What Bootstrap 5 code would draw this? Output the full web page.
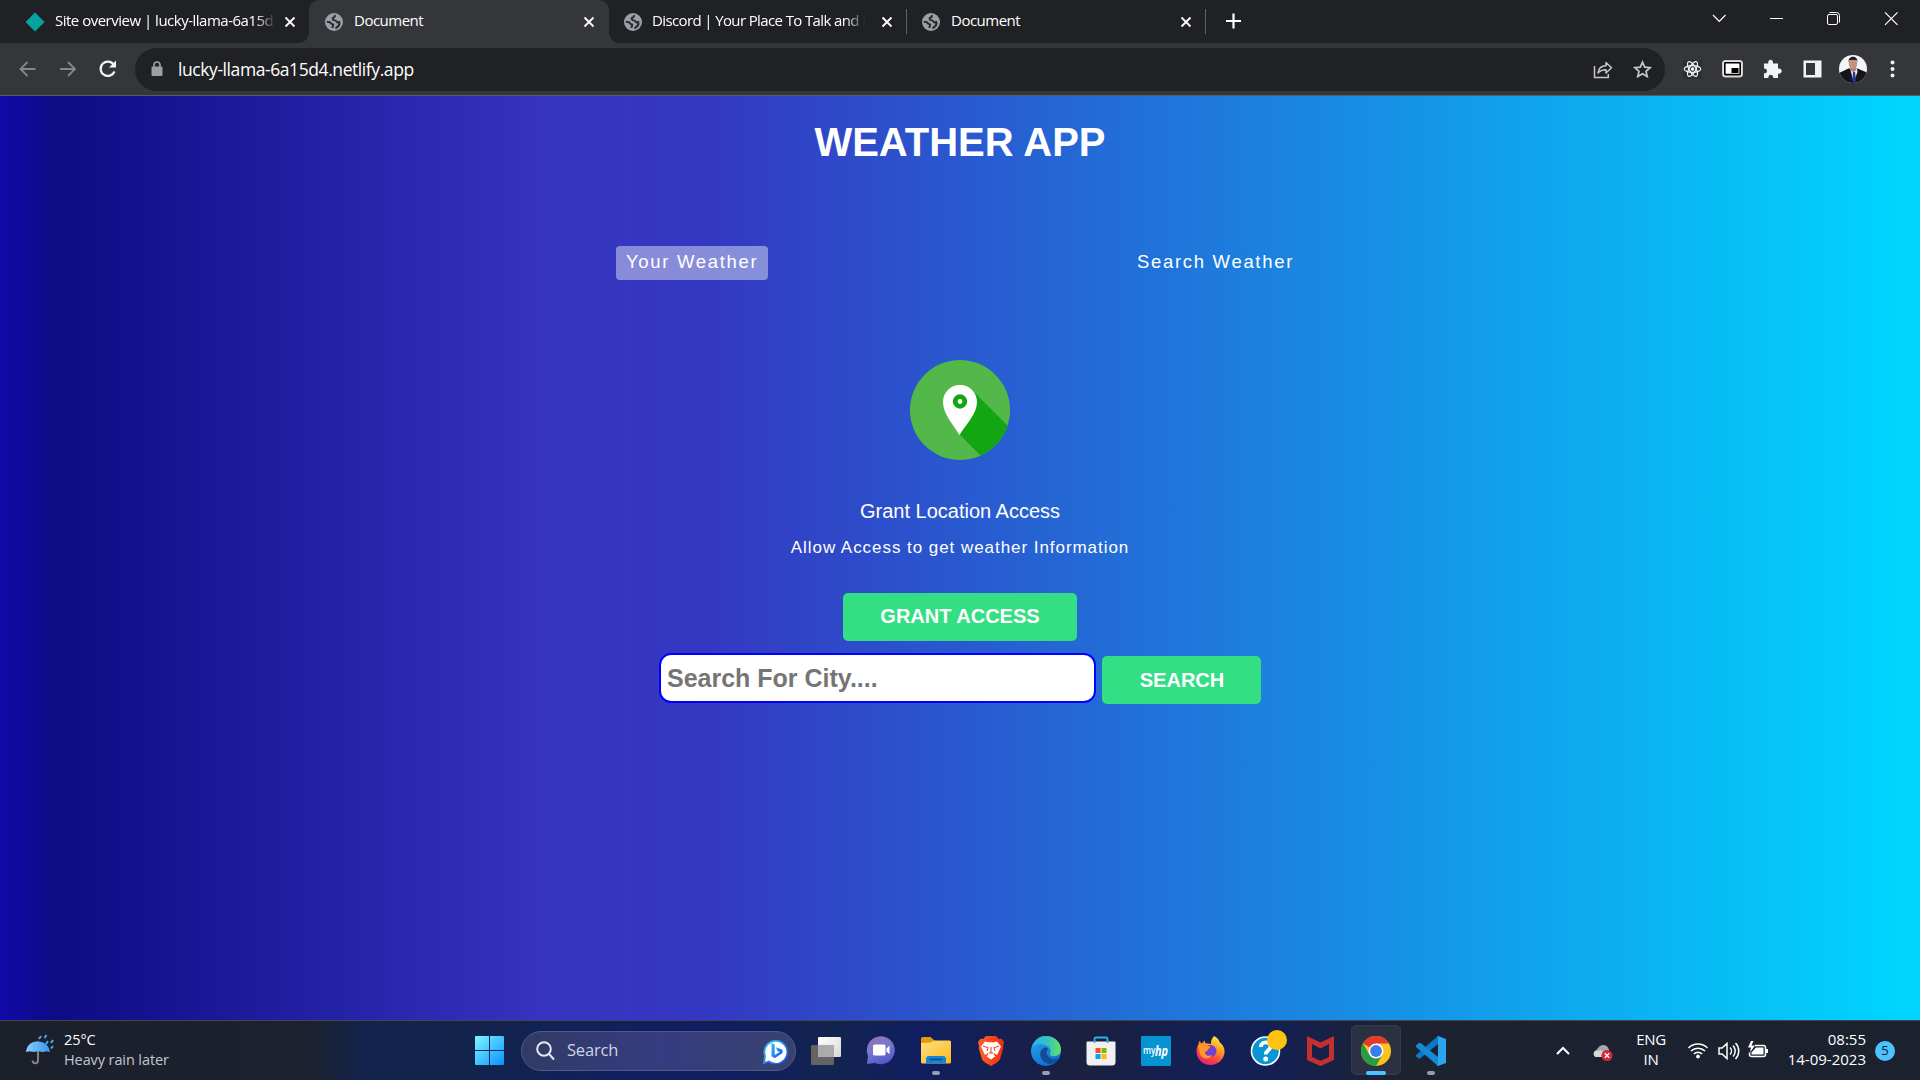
<!DOCTYPE html>
<html lang="en">
<head>
<meta charset="utf-8">
<meta name="viewport" content="width=device-width, initial-scale=1">
<title>Document</title>
<link href="https://cdn.jsdelivr.net/npm/bootstrap@5.3.0/dist/css/bootstrap.min.css" rel="stylesheet">
<style>
  body { width: 1920px; height: 1080px; overflow: hidden; font-family: "Open Sans", "Noto Sans", sans-serif; }
  svg { display: block; flex: none; }
  .tabstrip { height: 43px; background: #202124; color: #fff; font-size: 15px; }
  .browser-tab { height: 43px; }
  .tab-first { width: 309px; padding-left: 25px; padding-right: 13px; }
  .tab-active { width: 300px; background: #35363a; border-radius: 10px 10px 0 0; position: relative; padding-left: 16px; padding-right: 14px; }
  .tab-active::before, .tab-active::after { content: ""; position: absolute; bottom: 0; width: 10px; height: 10px; }
  .tab-active::before { left: -10px; background: radial-gradient(circle at 0 0, transparent 9.5px, #35363a 10px); }
  .tab-active::after { right: -10px; background: radial-gradient(circle at 100% 0, transparent 9.5px, #35363a 10px); }
  .tab-third { width: 297px; padding-left: 15px; padding-right: 13px; }
  .tab-fourth { width: 298px; padding-left: 15px; padding-right: 13px; }
  .tab-title { margin-left: 10px; letter-spacing: -.5px; flex: 1 1 0; min-width: 0; line-height: 20px; padding-bottom: 3px; }
  .tab-third .tab-title { letter-spacing: -.62px; }
  .fade-end { -webkit-mask-image: linear-gradient(90deg, #000 91%, transparent 100%); mask-image: linear-gradient(90deg, #000 91%, transparent 100%); }
  .tab-rule { width: 1px; height: 25px; background: #5f6368; }
  .toolbar { height: 53px; background: #35363a; border-bottom: 1px solid #5b5c60; padding: 0 15px 0 18px; }
  .omnibox { width: 1530px; height: 43px; border-radius: 22px; background: #202124; margin-left: 16px; padding: 0 13px 0 15px; color: #fff; font-size: 17.5px; }
  .url { margin-left: 14px; letter-spacing: -.42px; line-height: 24px; }
  .page { height: 924px; font-family: "Liberation Sans", Arial, sans-serif; color: #fff;
    background: linear-gradient(90deg, #1109a8 0%, #0c0c84 3%, #3533bf 28%, #3438c2 37%, #00d4ff 99%); padding-top: 23px; }
  .app-title { font-size: 40px; font-weight: 700; line-height: 47px; margin-bottom: 80px; }
  .mode-tabs { width: 688px; height: 34px; }
  .mode-tab { padding: 0 10px 2px; height: 34px; font-size: 18.500px; letter-spacing: 1.69px; line-height: 32px; border-radius: 4px; }
  .mode-tab.selected { background: rgba(219,226,239,.5); }
  .pin { margin-top: 80px; }
  .grant-title { font-size: 20px; line-height: 24px; margin-top: 39px; }
  .grant-text { font-size: 17px; line-height: 20px; letter-spacing: .95px; margin-top: 15px; }
  .action { background: #33de84; color: #fff; font-weight: 700; font-size: 20px; border-radius: 5px; height: 48px; line-height: 44px; text-align: center; text-transform: uppercase; }
  .grant-btn { width: 234px; margin-top: 35px; padding: 0 0 3px; }
  .search-btn { width: 159px; margin-top: 3px; padding: 0 0 1px 1px; }
  .search-form { margin-top: 12px; }
  .city { width: 437px; height: 50px; border: 2px solid #00f; border-radius: 12px; background: #fff; font-weight: 700; font-size: 25px; padding: 1px 6px 0; outline: 0; }
  .city::placeholder { color: #757575; opacity: 1; }
  .taskbar { height: 60px; border-top: 1px solid #44464b; color: #fff;
    background: linear-gradient(90deg, #1c202b 0, #1b212f 310px, #12234e 370px, #12244c 470px, #111f60 640px, #101d60 740px, #13244f 830px, #101e60 920px, #1b2040 1080px, #122056 1210px, #142052 1280px, #1d2231 1400px, #1c212e 1920px); }
  .weather { width: 447px; padding-left: 25px; font-size: 14.5px; line-height: 20px; }
  .weather-text { margin-left: 9px; letter-spacing: -.1px; padding-bottom: 2px; }
  .muted { color: #c3c7cc; }
  .app { width: 55px; height: 59px; position: relative; }
  .app .running { position: absolute; bottom: 5px; left: 23.5px; width: 8px; height: 4px; border-radius: 2px; background: #989cab; }
  .app.current::before { content: ""; position: absolute; left: 2.5px; top: 4px; width: 50px; height: 50px; border-radius: 5px; background: #2c3043; border: 1px solid #363a4b; }
  .app.current svg { position: relative; }
  .app.current .running { left: 17.5px; width: 20px; background: #4cc2ff; }
  .task-search { width: 275px; height: 40px; border-radius: 20px; background: linear-gradient(90deg, #303b66, #353c80 50%, #37426e); border: 1px solid #505a85; padding: 0 6px 0 14px; margin-left: 4px; margin-right: 2px; color: #d0d4e2; font-size: 16.5px; }
  .search-word { margin-left: 12px; letter-spacing: -.2px; }
  .tray { font-size: 15px; line-height: 20px; padding-right: 25px; }
  .tray-text { padding-bottom: 3px; }
  .clock { width: 94px; margin-right: 9px; letter-spacing: 0; }
  .lang { width: 40px; letter-spacing: -.3px; margin-right: 11px; }
  .notice { width: 20px; height: 20px; border-radius: 50%; background: #4cc2ff; color: #10202c; font-size: 13px; padding-bottom: 1px; }
</style>
</head>
<body>
<svg class="d-none">
  <symbol id="globe" viewBox="0 0 18 18"><circle cx="9" cy="9" r="9" fill="#9aa0a6"/><path d="M10.500 2.200c-1 .9-.4 1.700-1.900 2.300-1.400.5-1.200 1.700-.4 2.300.9.800 3 .4 3.400 1.800.3 1.200 1.700.8 2.700.4.700 2-.8 4.500-3.800 6.300M1.800 8.800c1.900 0 3.400.1 4 1.400.4 1 1.900.8 2.400 1.300.4.600-.6 1.500-.8 3.500" fill="none" stroke="#292a2d" stroke-width="2"/></symbol>
  <symbol id="cross" viewBox="0 0 12 12"><path d="M1.500 1.500l9 9m0-9l-9 9" stroke="#fff" stroke-width="1.800"/></symbol>
</svg>

<header>
  <div class="tabstrip d-flex">
    <div class="browser-tab tab-first d-flex align-items-center">
      <svg width="20" height="20" viewBox="0 0 20 20"><path d="M10 .5L19.500 10 10 19.500.5 10z" fill="#05a3a0"/></svg>
      <div class="tab-title text-nowrap fade-end">Site overview | lucky-llama-6a15d</div>
      <svg width="12" height="12" class="ms-2"><use href="#cross"/></svg>
    </div>
    <div class="browser-tab tab-active d-flex align-items-center">
      <svg width="18" height="18"><use href="#globe"/></svg>
      <div class="tab-title text-nowrap" style="margin-left:11px">Document</div>
      <svg width="12" height="12"><use href="#cross"/></svg>
    </div>
    <div class="browser-tab tab-third d-flex align-items-center">
      <svg width="18" height="18"><use href="#globe"/></svg>
      <div class="tab-title text-nowrap fade-end">Discord | Your Place To Talk and H</div>
      <svg width="12" height="12" class="ms-3"><use href="#cross"/></svg>
    </div>
    <div class="d-flex align-items-center"><div class="tab-rule"></div></div>
    <div class="browser-tab tab-fourth d-flex align-items-center">
      <svg width="18" height="18"><use href="#globe"/></svg>
      <div class="tab-title text-nowrap" style="margin-left:11px">Document</div>
      <svg width="12" height="12"><use href="#cross"/></svg>
    </div>
    <div class="d-flex align-items-center"><div class="tab-rule"></div></div>
    <svg width="60" height="42" viewBox="0 0 60 42"><path d="M27.500 13.500v15M20 21h15" stroke="#fff" stroke-width="2.200"/></svg>
    <svg class="ms-auto" width="220" height="42" viewBox="1700 0 220 42" fill="none" stroke="#fff"><path d="M1713 15l6.300 6.500 6.200-6.500M1885 12.300l12.500 12.500m0-12.500L1885 24.800" stroke-width="1.200"/><path d="M1770 18.500h13"/><rect x="1827.500" y="14.500" width="10" height="10" rx="1.500"/><path d="M1829.500 12.500h7a3 3 0 0 1 3 3v7"/></svg>
  </div>

  <div class="toolbar d-flex align-items-center">
    <svg width="101" height="30" viewBox="0 0 101 30" fill="none"><path d="M17.500 15h-15m7-7l-7 7 7 7M42 15h15m-7-7l7 7-7 7" stroke="#85878a" stroke-width="1.800"/><path d="M96 11A7.200 7.200 0 1 0 96.500 17.500" stroke="#f1f3f4" stroke-width="2.200"/><path d="M98 6.500v7h-7z" fill="#f1f3f4"/></svg>
    <div class="omnibox d-flex align-items-center">
      <svg width="14" height="16" viewBox="0 0 14 16"><rect x="1.500" y="5.500" width="11" height="9.500" rx="1.200" fill="#9aa0a6"/><path d="M4 6V4a3 3 0 0 1 6 0v2" fill="none" stroke="#9aa0a6" stroke-width="1.600"/></svg>
      <span class="url">lucky-llama-6a15d4.netlify.app</span>
      <svg class="ms-auto" width="60" height="24" viewBox="1592 57 60 24" fill="none" stroke="#c5c7ca" stroke-width="1.500"><path d="M1594.500 66v11.500h13.800v-3.500"/><path d="M1598 73c.5-5 3.500-7.300 8-7.300v-3.200l5.500 5.300-5.500 5.200v-3.300c-3.500 0-6 .8-8 3.300z" stroke-linejoin="round"/><path d="M1642.500 62.200l2.200 5 5.400.5-4.100 3.600 1.200 5.300-4.700-2.800-4.700 2.800 1.200-5.300-4.100-3.600 5.400-.5z" stroke-width="1.700"/></svg>
    </div>
    <svg width="240" height="36" viewBox="1665 51 240 36">
      <rect x="1683" y="60" width="19" height="19" fill="#2d2e31"/>
      <g fill="none" stroke="#f1f3f4" stroke-width="1.200"><ellipse cx="1692.500" cy="69" rx="8.300" ry="3.300"/><ellipse cx="1692.500" cy="69" rx="8.300" ry="3.300" transform="rotate(60 1692.500 69)"/><ellipse cx="1692.500" cy="69" rx="8.300" ry="3.300" transform="rotate(120 1692.500 69)"/></g><circle cx="1692.500" cy="69" r="1.700" fill="#fff"/>
      <rect x="1722.500" y="60.500" width="20" height="16.500" rx="2.500" fill="#e9eaec" stroke="#c9cacd"/><rect x="1724.800" y="62.800" width="15.400" height="11.800" rx=".5" fill="#fff" stroke="#000" stroke-width="1.600"/><rect x="1731.500" y="68" width="7" height="5" fill="#000"/>
      <path d="M1764 63.500h4.200c-.5-5 5.300-5 4.800 0h5v5c5-.5 5 5.700 0 5.200v4.300h-4.700c.3-4.300-5.300-4.300-5 0h-4.300v-4.700c4 .2 4-5 0-4.800z" fill="#f1f3f4"/>
      <path d="M1803.500 60.500h18v17h-18zm2.500 2.500v12h9V63z" fill="#f1f3f4" fill-rule="evenodd"/>
      <clipPath id="face"><circle cx="1853" cy="69" r="14"/></clipPath>
      <g clip-path="url(#face)"><rect x="1839" y="55" width="28" height="28" fill="#f3f4f6"/><path d="M1839 84v-11l9.500-4.500h9l9.500 4v11.500z" fill="#14141c"/><path d="M1850 68l3.500 4 3.500-4 .5 4-3 8h-1.500z" fill="#dfe3ee"/><path d="M1853 72l2 0 1 9-2 2-1.500-2z" fill="#28368c"/><path d="M1850.500 66h5.500v4l-2.500 2-3-2z" fill="#ac7d68"/><ellipse cx="1853" cy="63.500" rx="4.200" ry="5.600" fill="#c2947d"/><path d="M1848.500 62c-.5-7 9.500-7 9 0l-1-2h-7z" fill="#24201f"/></g>
      <g fill="#f1f3f4"><circle cx="1892.500" cy="62.500" r="2"/><circle cx="1892.500" cy="69" r="2"/><circle cx="1892.500" cy="75.500" r="2"/></g>
    </svg>
  </div>
</header>

<main class="page d-flex flex-column align-items-center">
  <h1 class="app-title">WEATHER APP</h1>
  <nav class="mode-tabs d-flex justify-content-between">
    <div class="mode-tab selected">Your Weather</div>
    <div class="mode-tab">Search Weather</div>
  </nav>
  <svg class="pin" width="100" height="100" viewBox="0 0 100 100">
    <clipPath id="disc"><circle cx="50" cy="50" r="50"/></clipPath>
    <g clip-path="url(#disc)"><path d="M0 0h100v100H0z" fill="#52b849"/><path d="M64.500 32.500L105 73v35H83L50 75z" fill="#12a712"/></g>
    <path d="M50 25c-9.500 0-17 7.500-17 17 0 12 10 22 16.500 33C56 64 67 54 67 42c0-9.500-7.500-17-17-17z" fill="#fff"/>
    <circle cx="50" cy="41.500" r="4.800" fill="#fff" stroke="#12a712" stroke-width="4.800"/>
  </svg>
  <div class="grant-title">Grant Location Access</div>
  <div class="grant-text">Allow Access to get weather Information</div>
  <button class="action grant-btn border-0">Grant Access</button>
  <form class="search-form d-flex align-items-start" style="gap:6px">
    <input class="city" placeholder="Search For City....">
    <button type="button" class="action search-btn border-0">Search</button>
  </form>
</main>

<footer class="taskbar d-flex align-items-center">
  <div class="weather d-flex align-items-center">
    <svg width="30" height="32" viewBox="0 0 30 32" style="margin-top:-4px"><defs><linearGradient id="umb"><stop offset="0" stop-color="#8ccaff"/><stop offset="1" stop-color="#3499ee"/></linearGradient></defs><path d="M13 18v9.500a2.700 2.700 0 0 1-5.400 0" fill="none" stroke="#88827e" stroke-width="2"/><path d="M1 19C2 11 7 8.500 13 8.500S24 12 25 19l-3-.8-4 .8-5-.8-4.500.8-4-.8z" fill="url(#umb)"/><path d="M13 8.500c-3 2-4 5-4.500 10.500M13 8.500c3 2 4.500 5 5 10.500" fill="none" stroke="#5bacf5" stroke-width=".8"/><path d="M16 3l-2 3m7.500-4l-2 3m3.500 3l-2 3m7-4l-2 3m2 3l-2 2.500" stroke="#4da7ee" stroke-width="2"/></svg>
    <div class="weather-text"><div>25°C</div><div class="muted">Heavy rain later</div></div>
  </div>
  <div class="d-flex align-items-center" style="margin-left:15px">
    <div class="app d-flex align-items-center justify-content-center"><svg width="29" height="29" viewBox="0 0 29 29"><defs><linearGradient id="win" x2="1" y2="1"><stop stop-color="#7df6ff"/><stop offset="1" stop-color="#0992ff"/></linearGradient></defs><path d="M0 1a1 1 0 0 1 1-1h13v14H0zm15-1h13a1 1 0 0 1 1 1v13H15zM0 15h14v14H1a1 1 0 0 1-1-1zm15 0h14v13a1 1 0 0 1-1 1H15z" fill="url(#win)"/></svg></div>
    <div class="task-search d-flex align-items-center">
      <svg width="19" height="20" viewBox="0 0 19 20" fill="none" stroke="#e4e8f0" stroke-width="2"><circle cx="8" cy="8" r="6.800"/><path d="M13 13l5 5.500"/></svg>
      <span class="search-word">Search</span>
      <svg class="ms-auto" width="26" height="26" viewBox="0 0 26 26"><defs><linearGradient id="bing" x2="1" y2="1"><stop stop-color="#35c4f3"/><stop offset="1" stop-color="#174ae4"/></linearGradient></defs><path d="M1 25l1-7a11.500 11.500 0 1 1 4 5.500z" fill="#fff" stroke="url(#bing)" stroke-width="1.800"/><path d="M8.500 5l3.200 1.300V17l5-3-2.300-1.100-1.500-3.600 6.600 2.500v3.300L11.700 20.300 8.500 18.300z" fill="url(#bing)"/></svg>
    </div>
    <div class="app d-flex align-items-center justify-content-center"><svg width="30" height="28" viewBox="0 0 30 28"><defs><linearGradient id="tv" x2="1" y2="1"><stop stop-color="#fff"/><stop offset="1" stop-color="#d8d8d8"/></linearGradient></defs><rect y="8" width="23" height="20" rx="1.200" fill="#646464"/><rect x="7" width="23" height="20" rx="1.200" fill="url(#tv)"/><path d="M7 8h16v12H8a1 1 0 0 1-1-1z" fill="#ababab"/></svg></div>
    <div class="app d-flex align-items-center justify-content-center"><svg width="30" height="29" viewBox="0 0 30 29"><defs><linearGradient id="chat" x1=".2" x2=".6" y2="1"><stop stop-color="#9275b8"/><stop offset=".5" stop-color="#7277ce"/><stop offset="1" stop-color="#5058c8"/></linearGradient></defs><path d="M1 28l1-8A14 14 0 1 1 9 27z" fill="url(#chat)"/><rect x="7" y="8.500" width="12.500" height="11" rx="1.500" fill="#fff"/><path d="M20.500 12.500l3-2.800v8.600l-3-2.800z" fill="#fff"/></svg></div>
    <div class="app d-flex align-items-center justify-content-center"><svg width="30" height="27" viewBox="0 0 30 27"><defs><linearGradient id="fold" x2="1" y2="1"><stop stop-color="#ffe07a"/><stop offset="1" stop-color="#f8ba22"/></linearGradient></defs><path d="M0 2a2 2 0 0 1 2-2h7.500l4 3.500V9H0z" fill="#e09c0c"/><path d="M0 6l10-.5 3-2h15.500A1.500 1.500 0 0 1 30 5v20a1.500 1.500 0 0 1-1.500 1.500h-27A1.500 1.500 0 0 1 0 25z" fill="url(#fold)"/><path d="M5 26.500V22a3 3 0 0 1 3-3h14a3 3 0 0 1 3 3v4.500z" fill="#1484d5"/><path d="M8.500 22.500h13" stroke="#0b4b86" stroke-width="1.500"/></svg><span class="running"></span></div>
    <div class="app d-flex align-items-center justify-content-center"><svg width="26" height="30" viewBox="0 0 26 30"><defs><linearGradient id="brave"><stop stop-color="#ff6328"/><stop offset="1" stop-color="#f02a10"/></linearGradient></defs><path d="M8 0h10l3 3 2.500-.3L26 6l-1 4 .3 2L22 23.500c-2 3-6 4.500-9 6.500-3-2-7-3.500-9-6.500L.7 12 1 10 0 6l2.500-3.300L5 3z" fill="url(#brave)"/><path d="M7 5.500l3 .8h6l3-.8 4 5-2.500 5.500-1.500 3-3-1.800v1.800l1.500 1.200-4.500 3.200-4.500-3.200 1.500-1.200v-1.800L7 19l-1.500-3L3 10.500z" fill="#fff"/><path d="M5 10l5 1.800-1 3M21 10l-5 1.800 1 3M13 11v6m-2.500 0h5" fill="none" stroke="#f74019" stroke-width="1.100"/></svg></div>
    <div class="app d-flex align-items-center justify-content-center"><svg width="30" height="30" viewBox="0 0 30 30"><defs><linearGradient id="e1" x2="1"><stop stop-color="#2fb4e8"/><stop offset=".55" stop-color="#35c1c3"/><stop offset="1" stop-color="#62e45b"/></linearGradient><linearGradient id="e2" x2=".7" y2="1"><stop stop-color="#2da8ea"/><stop offset="1" stop-color="#086cd2"/></linearGradient></defs><circle cx="15" cy="15" r="15" fill="url(#e2)"/><path d="M1 11C4 3 9.500 0 15 0c9 0 15 6.500 15 13.500 0 4.300-3 6.700-7 6.700-3.500 0-5-1.400-4-2.700 1-1.500 1-4-1-6C14 7.500 6 6.500 1 11z" fill="url(#e1)"/><path d="M15.500 11.500c-5-.5-7.500 5-5.500 10s8 8.500 13.500 5.500c1.500-1 3.500-3 4-4.500-4.500 2-10 0-11.500-4-.8-2-.5-4 1-5.500-.5-.8-.8-1.300-1.500-1.500z" fill="#134c92"/></svg><span class="running"></span></div>
    <div class="app d-flex align-items-center justify-content-center"><svg width="30" height="30" viewBox="0 0 30 30"><path d="M.5 6.500a1 1 0 0 1 1-1h27a1 1 0 0 1 1 1V26a3.500 3.500 0 0 1-3.500 3.500H4A3.500 3.500 0 0 1 .5 26z" fill="#f1f1f1"/><path d="M8.500 7V3a1.500 1.500 0 0 1 1.500-1.500h10A1.500 1.500 0 0 1 21.500 3v4" fill="none" stroke="#2ab3eb" stroke-width="1.800"/><path d="M9.500 12h5v5h-5z" fill="#f25022"/><path d="M15.500 12h5v5h-5z" fill="#7fba00"/><path d="M9.500 18h5v5h-5z" fill="#00a4ef"/><path d="M15.500 18h5v5h-5z" fill="#ffb900"/></svg></div>
    <div class="app d-flex align-items-center justify-content-center"><svg width="30" height="30" viewBox="0 0 30 30"><rect width="30" height="30" rx="1" fill="#0693d2"/><text x="2" y="18" font-size="10" font-weight="600" fill="#fff" font-family="Open Sans, sans-serif" textLength="12.500" lengthAdjust="spacingAndGlyphs">my</text><text x="14" y="19.500" font-size="14" font-weight="700" font-style="italic" fill="#fff" font-family="Open Sans, sans-serif" textLength="13" lengthAdjust="spacingAndGlyphs">hp</text></svg></div>
    <div class="app d-flex align-items-center justify-content-center"><svg width="29" height="30" viewBox="0 0 29 30"><defs><linearGradient id="fox" x1=".8" x2=".3" y2="1"><stop stop-color="#fff14a"/><stop offset=".35" stop-color="#ffa522"/><stop offset=".7" stop-color="#ff4a3c"/><stop offset="1" stop-color="#e2198b"/></linearGradient></defs><path d="M18 0c4 2 5 4 5.500 6C27.500 9 29 13 28.500 17 27.500 24 21.500 29 14.500 29 6.500 29 .5 23 .5 15c0-3 1-5 2-6.500L3 5l3 2.500C7 6 8 5 9 4.500V7l6 1C14.500 5 16 2 18 0z" fill="url(#fox)"/><circle cx="14.500" cy="15" r="6" fill="#7540ce"/><path d="M2 9c4-1.500 6 0 7.500 1l5 .5c-.5 2-3 2.500-3.500 4.500-1 1-1.500 0-2 1-.5 3 3 5 7 3-2 5-10 4.500-12-1z" fill="#ff9b23"/></svg></div>
    <div class="app d-flex align-items-center justify-content-center"><svg width="38" height="44" viewBox="0 0 38 44" style="overflow:visible"><circle cx="18.500" cy="22" r="14" fill="#0795d5" stroke="#fff" stroke-width="1.600"/><path d="M13.700 18c0-6.500 10.500-6 9.800 0-.4 3.200-4.800 3.500-4.800 7.500" fill="none" stroke="#fff" stroke-width="3.800"/><circle cx="18.700" cy="30" r="2.500" fill="#fff"/><circle cx="30" cy="11" r="10" fill="#ffc20e"/></svg></div>
    <div class="app d-flex align-items-center justify-content-center"><svg width="27" height="30" viewBox="0 0 27 30"><path d="M0 0l13.500 6.500L27 0v24l-13.500 6L0 24zm5 8v13l8.500 3.700L22 21V8l-8.500 4.500z" fill="#c4302f" fill-rule="evenodd"/></svg></div>
    <div class="app current d-flex align-items-center justify-content-center"><svg width="30" height="30" viewBox="0 0 30 30"><circle cx="15" cy="15" r="15" fill="#fcc31e"/><path d="M15 15L2 7.500A15 15 0 0 1 28 7.500H15z" fill="#e33b2e"/><path d="M2 7.500A15 15 0 0 0 15 30l6.500-11.200L15 15 8.500 18.800z" fill="#289b48"/><circle cx="15" cy="15" r="7.500" fill="#fff"/><circle cx="15" cy="15" r="5.900" fill="#3a7dee"/></svg><span class="running"></span></div>
    <div class="app d-flex align-items-center justify-content-center"><svg width="30" height="30" viewBox="0 0 30 30"><path d="M22 0v8L3.500 23 0 20.500v-1.500z" fill="#0b79c5"/><path d="M0 9.500L2.500 7 5 7.200 22 21v9L0 11z" fill="#1689d6"/><path d="M22 0l8 3v24l-8 3-1-.5 1-1V1.500l-1-1z" fill="#2aa5f1"/></svg><span class="running"></span></div>
  </div>
  <div class="tray d-flex align-items-center ms-auto">
    <svg width="70" height="40" viewBox="1550 1030 70 40" style="margin-right:11px"><path d="M1557 1053l6-6 6 6" fill="none" stroke="#fff" stroke-width="2"/><path d="M1596 1056a4 4 0 0 1 0-7c2-1 3-5 7-5s6 3 6 6v5z" fill="#a5a8ac"/><path d="M1595.500 1056c-4-3-1-7 2.500-6 3-2 6 0 7 6z" fill="#d5d7d9"/><circle cx="1607" cy="1054.500" r="5.500" fill="#dc2436"/><path d="M1604.800 1052.300l4.400 4.400m0-4.400l-4.400 4.400" stroke="#fff" stroke-width="1.400"/></svg>
    <div class="lang tray-text text-center"><div>ENG</div><div>IN</div></div>
    <svg width="90" height="30" viewBox="1682 1035 90 30" fill="none" stroke="#fff" stroke-width="1.500"><path d="M1688.500 1047a13.500 13.500 0 0 1 19 0M1691 1050a10 10 0 0 1 14 0M1693.800 1053a6 6 0 0 1 8.400 0"/><circle cx="1698" cy="1055.500" r="1.500" fill="#fff" stroke-width="1"/><path d="M1719 1047h3l5-4.500v15l-5-4.500h-3zM1730 1046.500a5 5 0 0 1 0 7M1733 1044.500a8 8 0 0 1 0 11M1735.500 1042a11.500 11.500 0 0 1 0 16"/><path d="M1755 1044.500h8.500a2 2 0 0 1 2 2v7a2 2 0 0 1-2 2h-12a2 2 0 0 1-2-2v-2"/><path d="M1756 1046.500h7.500v7h-12v-2z" fill="#fff" stroke="none"/><path d="M1767 1048v4" stroke-width="2"/><path d="M1751 1040l-3 6.500h3l-1 5 5-7h-3.500l2-4.500z" fill="#fff" stroke="none"/></svg>
    <div class="clock tray-text text-end"><div>08:55</div><div>14-09-2023</div></div>
    <div class="notice d-flex align-items-center justify-content-center">5</div>
  </div>
</footer>
<script src="https://cdn.jsdelivr.net/npm/bootstrap@5.3.0/dist/js/bootstrap.bundle.min.js"></script>
</body>
</html>
